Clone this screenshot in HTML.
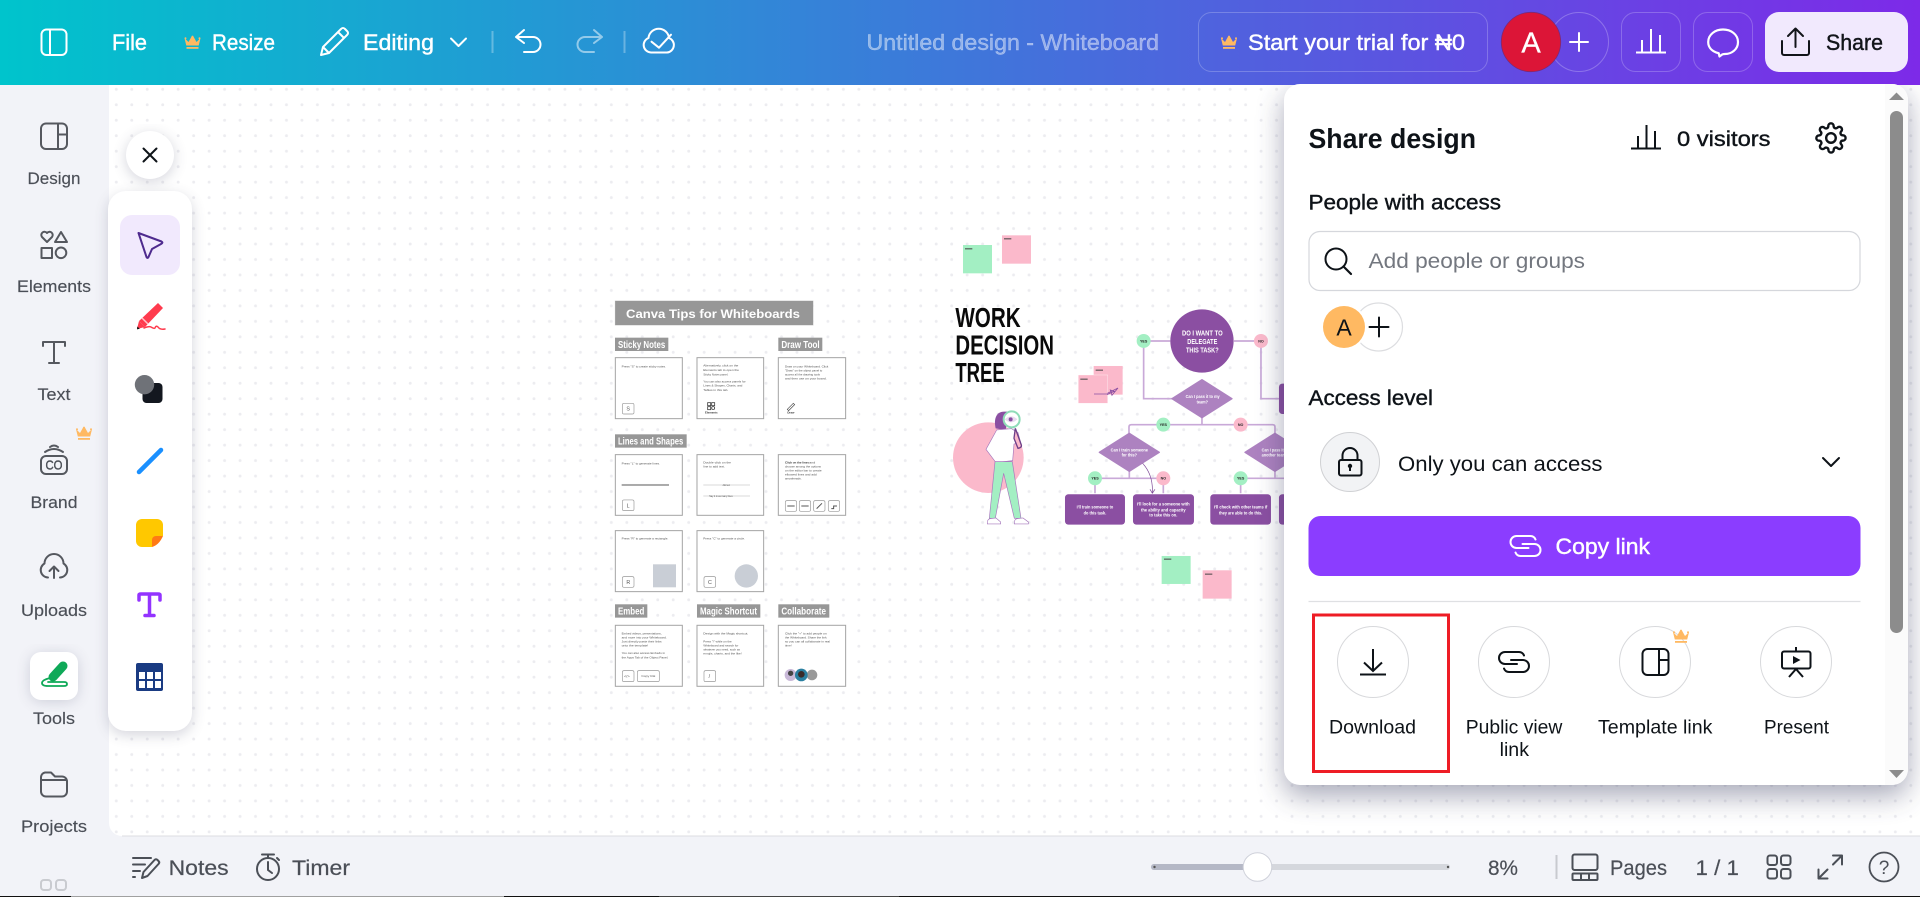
<!DOCTYPE html>
<html lang="en"><head><meta charset="utf-8"><title>Untitled design - Whiteboard</title>
<style>
html,body{margin:0;padding:0;width:1920px;height:897px;overflow:hidden;background:#f2f3f8}
svg{display:block;font-family:"Liberation Sans",sans-serif}
.m{stroke-width:.4px}
.nav text{font-size:17px;fill:#4b4f57;stroke:#4b4f57;stroke-width:.15px}
.nav .i{fill:none;stroke:#55585f;stroke-width:2;stroke-linecap:round;stroke-linejoin:round}
.tiny text{font-size:9px;fill:#555}
.tiny .b{font-weight:bold;fill:#333}
.tiny .lab{font-weight:bold;fill:#fff;font-size:31px}
.fl{font-weight:bold;fill:#fff;font-size:15px;text-anchor:middle}
.yn{font-weight:bold;fill:#222;font-size:11px;text-anchor:middle}
</style></head><body>
<svg width="1920" height="897" viewBox="0 0 1920 897" xmlns="http://www.w3.org/2000/svg">
<defs>
<linearGradient id="hdr" gradientUnits="userSpaceOnUse" x1="0" y1="0" x2="1920" y2="0"><stop offset="0" stop-color="#00c4cc"/><stop offset="1" stop-color="#7d2ae8"/></linearGradient>
<pattern id="dots" patternUnits="userSpaceOnUse" x="108.6" y="81.6" width="15.47" height="15.47"><circle cx="7.7" cy="7.7" r="1.45" fill="#ececf0"/></pattern>
<filter id="sh" x="-20%" y="-20%" width="140%" height="140%"><feGaussianBlur stdDeviation="14"/></filter>
<filter id="sh2" x="-40%" y="-20%" width="180%" height="140%"><feGaussianBlur stdDeviation="7"/></filter>
<g id="crown"><path d="M0 3.2a1 1 0 1 1 1.2 1L4 7 7 1.6a1 1 0 1 1 2 0L12 7l2.8-2.8a1 1 0 1 1 1.2-1L14.2 10.5H1.8z" fill="#ffb962"/><rect x="2" y="12" width="12" height="1.8" fill="#ffb962"/></g>
<g id="link" fill="none" stroke-width="2" stroke-linecap="round"><path d="M10-6.5a5.5 5.5 0 0 0-5-3.5h-14a6 6 0 0 0 0 12h12"/><path d="M-10 6.5a5.5 5.5 0 0 0 5 3.5h14a6 6 0 0 0 0-12h-12"/></g>
<clipPath id="cv"><path d="M109 85H1920V836H122a13 13 0 0 1-13-13z"/></clipPath>
</defs>

<rect width="1920" height="897" fill="#f2f3f8"/>
<!-- canvas -->
<path d="M109 85H1920V836H122a13 13 0 0 1-13-13z" fill="#fff"/>
<g clip-path="url(#cv)">
<rect x="109" y="85" width="1811" height="751" fill="url(#dots)"/>

<!-- Tips board -->
<g class="tiny" transform="translate(600 290) scale(.3333)">
<rect x="45" y="32" width="595" height="74" fill="#979797" stroke="#ddd" stroke-width="1"/>
<text x="78" y="84" textLength="522" lengthAdjust="spacingAndGlyphs" style="font-size:37px;font-weight:bold;fill:#fff">Canva Tips for Whiteboards</text>
<g fill="#979797">
<rect x="45" y="143" width="160" height="40"/><rect x="535" y="143" width="132" height="40"/><rect x="45" y="433" width="215" height="40"/><rect x="45" y="943" width="97" height="40"/><rect x="291" y="943" width="190" height="40"/><rect x="535" y="943" width="153" height="40"/>
</g>
<text class="lab" x="54" y="174" textLength="142" lengthAdjust="spacingAndGlyphs">Sticky Notes</text>
<text class="lab" x="544" y="174" textLength="115" lengthAdjust="spacingAndGlyphs">Draw Tool</text>
<text class="lab" x="54" y="464" textLength="196" lengthAdjust="spacingAndGlyphs">Lines and Shapes</text>
<text class="lab" x="54" y="974" textLength="79" lengthAdjust="spacingAndGlyphs">Embed</text>
<text class="lab" x="300" y="974" textLength="171" lengthAdjust="spacingAndGlyphs">Magic Shortcut</text>
<text class="lab" x="544" y="974" textLength="134" lengthAdjust="spacingAndGlyphs">Collaborate</text>
<g fill="#fff" stroke="#a4a4a4" stroke-width="3">
<rect x="46" y="203" width="201" height="183"/><rect x="291" y="203" width="200" height="183"/><rect x="535" y="203" width="202" height="183"/>
<rect x="46" y="494" width="201" height="182"/><rect x="291" y="494" width="200" height="182"/><rect x="535" y="494" width="202" height="182"/>
<rect x="46" y="722" width="201" height="183"/><rect x="291" y="722" width="200" height="183"/>
<rect x="46" y="1006" width="201" height="183"/><rect x="291" y="1006" width="200" height="183"/><rect x="535" y="1006" width="202" height="183"/>
</g>
<text x="65" y="233" textLength="133" lengthAdjust="spacingAndGlyphs">Press "S" to create sticky notes.</text>
<text x="310" y="230" textLength="105" lengthAdjust="spacingAndGlyphs">Alternatively, click on the</text>
<text x="310" y="243" textLength="107" lengthAdjust="spacingAndGlyphs">Elements tab to open the</text>
<text x="310" y="256" textLength="75" lengthAdjust="spacingAndGlyphs">Sticky Notes panel.</text>
<text x="310" y="278" textLength="127" lengthAdjust="spacingAndGlyphs">You can also access panels for</text>
<text x="310" y="290" textLength="117" lengthAdjust="spacingAndGlyphs">Lines &amp; Shapes, Charts, and</text>
<text x="310" y="303" textLength="75" lengthAdjust="spacingAndGlyphs">Tables in this tab.</text>
<g fill="none" stroke="#444" stroke-width="2.5"><rect x="323" y="338" width="9" height="9"/><rect x="335" y="338" width="9" height="9"/><rect x="323" y="350" width="9" height="9"/><circle cx="339.500" cy="354" r="4.500"/></g>
<text class="b" x="315" y="371" textLength="38" lengthAdjust="spacingAndGlyphs">Elements</text>
<text x="555" y="232" textLength="130" lengthAdjust="spacingAndGlyphs">Draw on your Whiteboard. Click</text>
<text x="555" y="244" textLength="112" lengthAdjust="spacingAndGlyphs">"Draw" on the object panel to</text>
<text x="555" y="256" textLength="105" lengthAdjust="spacingAndGlyphs">access all the drawing tools</text>
<text x="555" y="268" textLength="125" lengthAdjust="spacingAndGlyphs">and then use on your board.</text>
<path d="M562 358l18-18 4 4-18 18z" fill="none" stroke="#444" stroke-width="2"/>
<text class="b" x="562" y="371" textLength="21" lengthAdjust="spacingAndGlyphs">Draw</text>
<text x="65" y="524" textLength="115" lengthAdjust="spacingAndGlyphs">Press "L" to generate lines.</text>
<rect x="65" y="582" width="142" height="6" fill="#aaa"/>
<text x="310" y="520" textLength="83" lengthAdjust="spacingAndGlyphs">Double-click on the</text>
<text x="310" y="533" textLength="65" lengthAdjust="spacingAndGlyphs">line to add text.</text>
<path d="M310 585h140M310 618h140" stroke="#ccc" stroke-width="2"/>
<text x="368" y="588" textLength="22" lengthAdjust="spacingAndGlyphs" style="font-size:7px">Add text</text>
<text x="328" y="621" textLength="70" lengthAdjust="spacingAndGlyphs" style="font-size:7px">Say it in as many lines</text>
<text class="b" x="555" y="520" textLength="72" lengthAdjust="spacingAndGlyphs">Click on the lines</text>
<text x="628" y="520" textLength="18" lengthAdjust="spacingAndGlyphs">and</text>
<text x="555" y="532" textLength="108" lengthAdjust="spacingAndGlyphs">choose among the options</text>
<text x="555" y="544" textLength="110" lengthAdjust="spacingAndGlyphs">on the editor bar to create</text>
<text x="555" y="556" textLength="95" lengthAdjust="spacingAndGlyphs">elbowed lines and add</text>
<text x="555" y="568" textLength="50" lengthAdjust="spacingAndGlyphs">arrowheads.</text>
<g fill="#fff" stroke="#999" stroke-width="2">
<rect x="67" y="340" width="35" height="32" rx="5"/><rect x="67" y="630" width="35" height="32" rx="5"/>
<rect x="556" y="632" width="34" height="32" rx="5"/><rect x="598" y="632" width="34" height="32" rx="5"/><rect x="641" y="632" width="34" height="32" rx="5"/><rect x="685" y="632" width="34" height="32" rx="5"/>
<rect x="67" y="860" width="35" height="32" rx="5"/><rect x="312" y="860" width="35" height="32" rx="5"/>
<rect x="67" y="1142" width="35" height="33" rx="5"/><rect x="112" y="1142" width="66" height="33" rx="5"/><rect x="312" y="1142" width="35" height="33" rx="5"/>
</g>
<path d="M562 648h22M604 648h22M650 656l16-16M694 656h7v-8h10" stroke="#555" stroke-width="3" fill="none"/>
<g><text x="79" y="362" style="font-size:16px">S</text><text x="80" y="652" style="font-size:16px">L</text><text x="79" y="882" style="font-size:16px">R</text><text x="324" y="882" style="font-size:16px">C</text><text x="72" y="1163" style="font-size:12px">&lt;/&gt;</text><text x="326" y="1164" style="font-size:16px">/</text></g>
<text x="124" y="1161" textLength="42" lengthAdjust="spacingAndGlyphs" style="font-size:8px">Copy link</text>
<text x="65" y="748" textLength="140" lengthAdjust="spacingAndGlyphs">Press "R" to generate a rectangle.</text>
<rect x="159" y="823" width="69" height="69" fill="#c9ced6"/>
<text x="310" y="748" textLength="125" lengthAdjust="spacingAndGlyphs">Press "C" to generate a circle.</text>
<circle cx="439" cy="858" r="35" fill="#c9ced6"/>
<text x="65" y="1033" textLength="120" lengthAdjust="spacingAndGlyphs">Embed videos, presentations,</text>
<text x="65" y="1045" textLength="135" lengthAdjust="spacingAndGlyphs">and more into your Whiteboard.</text>
<text x="65" y="1057" textLength="120" lengthAdjust="spacingAndGlyphs">Just directly paste their links</text>
<text x="65" y="1069" textLength="80" lengthAdjust="spacingAndGlyphs">onto the template!</text>
<text x="65" y="1092" textLength="130" lengthAdjust="spacingAndGlyphs">You can also access Embeds in</text>
<text x="65" y="1105" textLength="140" lengthAdjust="spacingAndGlyphs">the Apps Tab of the Object Panel.</text>
<text x="310" y="1033" textLength="135" lengthAdjust="spacingAndGlyphs">Design with the Magic shortcut.</text>
<text x="310" y="1057" textLength="85" lengthAdjust="spacingAndGlyphs">Press "/" while on the</text>
<text x="310" y="1069" textLength="105" lengthAdjust="spacingAndGlyphs">Whiteboard and search for</text>
<text x="310" y="1081" textLength="110" lengthAdjust="spacingAndGlyphs">whatever you need, such as</text>
<text x="310" y="1093" textLength="115" lengthAdjust="spacingAndGlyphs">emojis, charts, and the like!</text>
<text x="555" y="1033" textLength="125" lengthAdjust="spacingAndGlyphs">Click the "+" to add people on</text>
<text x="555" y="1045" textLength="125" lengthAdjust="spacingAndGlyphs">the Whiteboard. Share the link</text>
<text x="555" y="1057" textLength="135" lengthAdjust="spacingAndGlyphs">so you can all collaborate in real</text>
<text x="555" y="1069" textLength="20" lengthAdjust="spacingAndGlyphs">time!</text>
<circle cx="572" cy="1155" r="18" fill="#c9b9d8"/><circle cx="572" cy="1150" r="8" fill="#444"/>
<circle cx="636" cy="1155" r="16" fill="#999"/>
<circle cx="604" cy="1155" r="19" fill="#2a7fa0"/><circle cx="604" cy="1153" r="10" fill="#3a2a28"/>
</g>

<!-- decision tree -->
<g transform="translate(930 220) scale(.3333)">
<rect x="99" y="75" width="87" height="85" fill="#a3efc3"/><rect x="216" y="46" width="87" height="85" fill="#fbb9cb"/>
<rect x="105" y="85" width="22" height="3" fill="#444"/><rect x="222" y="55" width="22" height="3" fill="#444"/>
<g font-weight="bold" fill="#0a0a0a" font-size="82">
<text x="76" y="321" textLength="196" lengthAdjust="spacingAndGlyphs">WORK</text>
<text x="76" y="403" textLength="296" lengthAdjust="spacingAndGlyphs">DECISION</text>
<text x="76" y="486" textLength="148" lengthAdjust="spacingAndGlyphs">TREE</text>
</g>
<circle cx="175" cy="713" r="106" fill="#fbb9cb"/>
<!-- person -->
<path d="M197 625c-6-25 0-50 25-50h15l-10 55z" fill="#8b4fa2"/>
<path d="M200 630l-22 40-10 18 30 40 50-6 4-50 20-4-8-30-20-12z" fill="#fff" stroke="#a678bd" stroke-width="2"/>
<path d="M195 725h52l26 170h-20l-32-135-25 135h-18z" fill="#a3efc3" stroke="#a678bd" stroke-width="2"/>
<path d="M172 908q0-10 8-12l18-2 14 12v6h-40zM253 908q0-10 8-12l18-2 16 12v6h-42z" fill="#fff" stroke="#a678bd" stroke-width="2"/>
<path d="M256 625l18 50q2 8-10 10l-12-30z" fill="#fbb9cb" stroke="#6d3f88" stroke-width="4"/>
<circle cx="245" cy="598" r="24" fill="#fff" stroke="#8fdcb8" stroke-width="6"/>
<path d="M224 598q20-18 38 0q-18 18-38 0z" fill="#e8dcef"/><circle cx="242" cy="598" r="6" fill="#8b4fa2"/>
<!-- connectors -->
<g fill="none" stroke="#c9a9d8" stroke-width="5">
<path d="M641 363h80v0M912 363h81v173h55M641 363v173h88"/>
<path d="M816 590v24M597 640v-19q0-7 7-7h424q7 0 7 7v19"/>
<path d="M598 750v25M495 820v-45h205v45"/>
<path d="M1035 750v25M932 820v-45h170"/>
</g>
<circle cx="816" cy="363" r="95" fill="#8b4fa2"/>
<path d="M816 479l90 57-90 57-90-57z" fill="#ad82c0" stroke="#ad82c0" stroke-width="4" stroke-linejoin="round"/>
<path d="M598 640l90 57-90 57-90-57z" fill="#ad82c0" stroke="#ad82c0" stroke-width="4" stroke-linejoin="round"/>
<path d="M1035 640l90 57-90 57-90-57z" fill="#ad82c0" stroke="#ad82c0" stroke-width="4" stroke-linejoin="round"/>
<g fill="#8b4fa2"><rect x="405" y="823" width="180" height="91" rx="10"/><rect x="609" y="823" width="183" height="91" rx="10"/><rect x="841" y="823" width="182" height="91" rx="10"/><rect x="1047" y="823" width="100" height="91" rx="10"/><rect x="1047" y="491" width="100" height="91" rx="10"/></g>
<g fill="#a3efc3"><circle cx="641" cy="363" r="21"/><circle cx="700" cy="614" r="21"/><circle cx="495" cy="775" r="21"/><circle cx="932" cy="775" r="21"/></g>
<g fill="#fbb9cb"><circle cx="993" cy="363" r="21"/><circle cx="932" cy="614" r="21"/><circle cx="700" cy="775" r="21"/></g>
<g class="yn"><text class="yn" x="641" y="367">YES</text><text class="yn" x="700" y="618">YES</text><text class="yn" x="495" y="779">YES</text><text class="yn" x="932" y="779">YES</text><text class="yn" x="993" y="367">NO</text><text class="yn" x="932" y="618">NO</text><text class="yn" x="700" y="779">NO</text></g>
<text class="fl" x="817" y="347" style="font-size:21px" textLength="122" lengthAdjust="spacingAndGlyphs">DO I WANT TO</text>
<text class="fl" x="817" y="372" style="font-size:21px" textLength="90" lengthAdjust="spacingAndGlyphs">DELEGATE</text>
<text class="fl" x="817" y="398" style="font-size:21px" textLength="98" lengthAdjust="spacingAndGlyphs">THIS TASK?</text>
<text class="fl" x="818" y="534" textLength="102" lengthAdjust="spacingAndGlyphs">Can I pass it to my</text>
<text class="fl" x="817" y="551" textLength="34" lengthAdjust="spacingAndGlyphs">team?</text>
<text class="fl" x="598" y="695" textLength="112" lengthAdjust="spacingAndGlyphs">Can I train someone</text>
<text class="fl" x="598" y="710" textLength="46" lengthAdjust="spacingAndGlyphs">for this?</text>
<text class="fl" x="1035" y="695" textLength="80" lengthAdjust="spacingAndGlyphs">Can I pass it to</text>
<text class="fl" x="1035" y="710" textLength="80" lengthAdjust="spacingAndGlyphs">another team?</text>
<text class="fl" x="495" y="866" textLength="110" lengthAdjust="spacingAndGlyphs">I'll train someone to</text>
<text class="fl" x="495" y="884" textLength="68" lengthAdjust="spacingAndGlyphs">do this task.</text>
<text class="fl" x="700" y="857" textLength="158" lengthAdjust="spacingAndGlyphs">I'll look for a someone with</text>
<text class="fl" x="700" y="875" textLength="134" lengthAdjust="spacingAndGlyphs">the ability and capacity</text>
<text class="fl" x="700" y="890" textLength="84" lengthAdjust="spacingAndGlyphs">to take this on.</text>
<text class="fl" x="932" y="866" textLength="160" lengthAdjust="spacingAndGlyphs">I'll check with other teams if</text>
<text class="fl" x="932" y="884" textLength="130" lengthAdjust="spacingAndGlyphs">they are able to do this.</text>
<path d="M638 730q32 35 29 88M660 808l7 12 8-12" fill="none" stroke="#7a4494" stroke-width="2"/>
<rect x="491" y="438" width="87" height="86" fill="#fbb9cb"/>
<rect x="445" y="465" width="88" height="85" fill="#fbb9cb" stroke="#fff" stroke-width="1"/>
<rect x="497" y="449" width="22" height="3" fill="#444"/><rect x="451" y="476" width="22" height="3" fill="#444"/>
<path d="M492 522h40M532 520l32-16-18 22-5-16 12 4-22 10" fill="none" stroke="#8b4fa2" stroke-width="2.500"/>
<rect x="695" y="1008" width="87" height="84" fill="#a3efc3"/><rect x="818" y="1051" width="87" height="85" fill="#fbb9cb"/>
<rect x="702" y="1016" width="22" height="3" fill="#444"/><rect x="825" y="1061" width="22" height="3" fill="#444"/>
</g>
<!-- panel shadow -->
<rect x="1284" y="94" width="624" height="702" rx="16" fill="#30345a" opacity=".42" filter="url(#sh)"/>
</g>

<!-- header -->
<rect width="1920" height="85" fill="url(#hdr)"/>
<g fill="none" stroke="#fff" stroke-width="2" stroke-linecap="round" stroke-linejoin="round">
<rect x="41.500" y="29.500" width="25" height="25.500" rx="5"/><path d="M50 30v25"/>
<path d="M321 55l2-8L341 29q2-2 4 0l2 2q2 2 0 4L329 53zM338 32l6 6M323 47l6 6"/>
<path d="M451 38.500l7.500 7.500 7.500-7.500"/>
<path d="M524 30l-8 7 8 6M516 37h17a7.500 7.500 0 0 1 0 15h-9"/>
<g opacity=".5"><path d="M594 30l8 7-8 6M602 37h-17a7.500 7.500 0 0 0 0 15h9"/></g>
<path d="M651 52.500a7.500 7.500 0 0 1-2.500-14.500a10.300 10.300 0 0 1 20.500 0a7.500 7.500 0 0 1-2 14.500z"/>
<path d="M651.500 41.700l7.500 6 12-13"/>
</g>
<path d="M492.500 31v22M624.500 31v22" stroke="#fff" stroke-opacity=".3" stroke-width="2"/>
<g fill="#fff" stroke="#fff" class="m" font-size="22">
<text x="112" y="50" textLength="35" lengthAdjust="spacingAndGlyphs">File</text>
<text x="212" y="50" textLength="63" lengthAdjust="spacingAndGlyphs">Resize</text>
<text x="363" y="50" textLength="71" lengthAdjust="spacingAndGlyphs">Editing</text>
<text x="1248" y="50" textLength="217" lengthAdjust="spacingAndGlyphs">Start your trial for ₦0</text>
</g>
<text x="866.500" y="50" textLength="292.500" lengthAdjust="spacingAndGlyphs" font-size="22" fill="#fff" fill-opacity=".45" stroke="#fff" stroke-opacity=".45" class="m">Untitled design - Whiteboard</text>
<use href="#crown" transform="translate(184.500 35)"/>
<use href="#crown" transform="translate(1221 35)"/>
<rect x="1198.500" y="12.500" width="289" height="59" rx="13" fill="none" stroke="#fff" stroke-opacity=".22"/>
<circle cx="1579" cy="42" r="29.500" fill="none" stroke="#fff" stroke-opacity=".25"/>
<path d="M1570 42h18M1579 33v18" stroke="#fff" stroke-width="2" stroke-linecap="round"/>
<circle cx="1531" cy="42" r="29.700" fill="#dc1537" stroke="#7a2a78" stroke-width=".8"/>
<text x="1531" y="52.500" text-anchor="middle" font-size="29" fill="#fff" stroke="#fff" stroke-width=".3">A</text>
<rect x="1621.500" y="12.500" width="59" height="59" rx="14" fill="none" stroke="#fff" stroke-opacity=".22"/>
<rect x="1693.500" y="12.500" width="59" height="59" rx="14" fill="none" stroke="#fff" stroke-opacity=".22"/>
<path d="M1636 52.500h30M1642 52v-12M1651 52V29M1660 52V35" stroke="#fff" stroke-width="2" fill="none"/>
<path d="M1723 29.500c8 0 15 5 15 12.500s-6.500 12-13 12c-1.500 0-2.500 0-3.500 1l-2 1.500-.8-3.300c-6-1.500-10.500-5.200-10.500-11.200 0-7.500 7-12.500 14.800-12.500z" fill="none" stroke="#fff" stroke-width="2.200" stroke-linejoin="round"/>
<rect x="1765" y="12" width="143" height="60" rx="14" fill="#f1e9fd"/>
<path d="M1782 41v12a2 2 0 0 0 2 2h23a2 2 0 0 0 2-2V41M1795.500 47V29M1788 36l7.500-7.500 7.500 7.500" fill="none" stroke="#12151a" stroke-width="2" stroke-linecap="round" stroke-linejoin="round"/>
<text x="1826" y="50" textLength="57" lengthAdjust="spacingAndGlyphs" font-size="22" fill="#12151a" stroke="#12151a" class="m">Share</text>

<!-- left nav -->
<g class="nav">
<text x="27.500" y="184" textLength="53" lengthAdjust="spacingAndGlyphs">Design</text>
<text x="17" y="292" textLength="74" lengthAdjust="spacingAndGlyphs">Elements</text>
<text x="37.500" y="400" textLength="33" lengthAdjust="spacingAndGlyphs">Text</text>
<text x="30.500" y="508" textLength="47" lengthAdjust="spacingAndGlyphs">Brand</text>
<text x="21" y="616" textLength="66" lengthAdjust="spacingAndGlyphs">Uploads</text>
<text x="33" y="724" textLength="42" lengthAdjust="spacingAndGlyphs">Tools</text>
<text x="21" y="832" textLength="66" lengthAdjust="spacingAndGlyphs">Projects</text>
<g class="i">
<rect x="41" y="123.500" width="26" height="25.500" rx="5"/><path d="M58 124v25M58 134.500h9"/>
<path d="M47 242l-5-5a3.200 3.200 0 0 1 5-4a3.200 3.200 0 0 1 5 4z"/><path d="M61 232l6 10h-12z"/><rect x="41.500" y="248" width="10.500" height="10"/><circle cx="61" cy="252.800" r="5.300"/>
<path d="M43 346v-4h22v4M54 342v21M49 363h10"/>
<rect x="41" y="456" width="26" height="18" rx="5"/><path d="M45 452q9-6 18 0M50 447q4-3 8 0"/>
<path d="M54 578v-11M49.500 571l4.500-4.500 4.500 4.500M48 577.500a7.500 7.500 0 0 1-3.500-14a9.500 9.500 0 0 1 19 0a7.500 7.500 0 0 1-3.500 14"/>
<path d="M41 792v-15a5 5 0 0 1 4-4.500h6l4 4h7a5 5 0 0 1 5 5v10a5 5 0 0 1-5 5H46a5 5 0 0 1-5-5zM42 780h24"/>
</g>
<text x="54" y="469.500" text-anchor="middle" style="font-size:13px;stroke-width:.4px;text-anchor:middle" textLength="17" lengthAdjust="spacingAndGlyphs">CO</text>
<g fill="none" stroke="#c9cbd0" stroke-width="2"><rect x="41" y="880" width="10" height="10" rx="3"/><rect x="56" y="880" width="10" height="10" rx="3"/></g>
</g>
<use href="#crown" transform="translate(76 426)"/>
<rect x="30" y="654" width="48" height="48" rx="12" fill="#3c4060" opacity=".2" filter="url(#sh2)"/>
<rect x="30" y="652" width="48" height="48" rx="11" fill="#fff"/>
<path d="M53 677l10-11" stroke="#0fa958" stroke-width="9" stroke-linecap="round"/>
<path d="M50 678q-8 2-8 5t6 3h16q3 0 3-2t-3-2H48" fill="none" stroke="#0fa958" stroke-width="1.800" stroke-linecap="round"/>

<!-- tool panel -->
<rect x="108" y="195" width="84" height="540" rx="18" fill="#3c4060" opacity=".22" filter="url(#sh2)"/>
<circle cx="150" cy="158" r="24" fill="#3c4060" opacity=".22" filter="url(#sh2)"/>
<path d="M108 209a18 18 0 0 1 18-18h48a18 18 0 0 1 18 18v504a18 18 0 0 1-18 18h-48a18 18 0 0 1-18-18z" fill="#fff"/>
<circle cx="150" cy="155" r="24" fill="#fff"/>
<path d="M143.500 148.500l13 13M156.500 148.500l-13 13" stroke="#0e1318" stroke-width="2" stroke-linecap="round"/>
<rect x="120" y="215" width="60" height="60" rx="12" fill="#f1e9fd"/>
<path d="M138.500 233l23 8.500q2 1-.5 2.500l-9 5-3.500 8q-1 2-2 0z" fill="none" stroke="#4e2a8e" stroke-width="2" stroke-linejoin="round"/>
<!-- red pen -->
<path d="M139 321L158 303l5 5L145 327z" fill="#ff3b4e"/>
<path d="M142 318l6 6" stroke="#ffc4ca" stroke-width="1.500"/>
<path d="M139 321l6 6-8 2z" fill="#ff3b4e"/><path d="M137.300 326.500l2.500 2.300-2.800.6z" fill="#111"/>
<path d="M144 328q5-2 7-1q3 2 4 1q1-3 3-1q2 3 7 2" fill="none" stroke="#ff3b4e" stroke-width="1.500" stroke-linecap="round"/>
<rect x="142.500" y="383" width="20" height="20" rx="4" fill="#13171f"/>
<circle cx="144.500" cy="384.700" r="9.700" fill="#6f7278"/>
<path d="M139 472l22-22" stroke="#1a90ff" stroke-width="4.500" stroke-linecap="round"/>
<path d="M136 525a6 6 0 0 1 6-6h15a6 6 0 0 1 6 6v11l-11 11h-10a6 6 0 0 1-6-6z" fill="#ffc800"/>
<path d="M163 536h-7a4 4 0 0 0-4 4v7q7-2 11-11z" fill="#ff7a14"/>
<path d="M139 600v-5q0-1 2-1h17q2 0 2 1v5M149.500 595v20M145 615.500h9" fill="none" stroke="#9333ff" stroke-width="3.500" stroke-linecap="round"/>
<rect x="136" y="663" width="27" height="28" rx="2" fill="#1a3b82"/>
<g fill="#fff"><rect x="139" y="672" width="6" height="7"/><rect x="147" y="672" width="6" height="7"/><rect x="155" y="672" width="6" height="7"/><rect x="139" y="681" width="6" height="7"/><rect x="147" y="681" width="6" height="7"/><rect x="155" y="681" width="6" height="7"/></g>

<!-- share panel -->
<rect x="1284" y="84" width="624" height="701" rx="16" fill="#fff"/>
<path d="M1885 84h7a16 16 0 0 1 16 16v669a16 16 0 0 1-16 16h-7z" fill="#fbfbfb"/>
<path d="M1889 100l7.500-7.500 7.500 7.500zM1889 770l7.500 8 7.500-8z" fill="#8c8c8c"/>
<rect x="1890" y="111" width="13" height="522" rx="6.500" fill="#8c8c8c"/>
<text x="1308.500" y="148" textLength="167.500" lengthAdjust="spacingAndGlyphs" font-size="28" font-weight="bold" fill="#0e1318">Share design</text>
<path d="M1631 148.500h30M1638 148v-12M1646.500 148v-23M1655 148v-17" stroke="#0e1318" stroke-width="2" fill="none"/>
<text x="1677" y="146" textLength="93.500" lengthAdjust="spacingAndGlyphs" font-size="21.500" fill="#0e1318" stroke="#0e1318" class="m">0 visitors</text>
<g transform="translate(1815 122) scale(1.33)"><path fill="none" stroke="#0e1318" stroke-width="1.800" stroke-linejoin="round" d="M19.400 15a1.650 1.650 0 0 0 .33 1.820l.06.06a2 2 0 0 1 0 2.830 2 2 0 0 1-2.830 0l-.06-.06a1.650 1.650 0 0 0-1.820-.33 1.650 1.650 0 0 0-1 1.510V21a2 2 0 0 1-2 2 2 2 0 0 1-2-2v-.09A1.650 1.650 0 0 0 9 19.400a1.650 1.650 0 0 0-1.820.33l-.06.06a2 2 0 0 1-2.830 0 2 2 0 0 1 0-2.830l.06-.06a1.650 1.650 0 0 0 .33-1.820 1.650 1.650 0 0 0-1.510-1H3a2 2 0 0 1-2-2 2 2 0 0 1 2-2h.09A1.650 1.650 0 0 0 4.600 9a1.650 1.650 0 0 0-.33-1.820l-.06-.06a2 2 0 0 1 0-2.830 2 2 0 0 1 2.830 0l.06.06a1.650 1.650 0 0 0 1.820.33H9a1.650 1.650 0 0 0 1-1.510V3a2 2 0 0 1 2-2 2 2 0 0 1 2 2v.09a1.650 1.650 0 0 0 1 1.510 1.650 1.650 0 0 0 1.820-.33l.06-.06a2 2 0 0 1 2.830 0 2 2 0 0 1 0 2.830l-.06.06a1.650 1.650 0 0 0-.33 1.820V9a1.650 1.650 0 0 0 1.510 1H21a2 2 0 0 1 2 2 2 2 0 0 1-2 2h-.09a1.650 1.650 0 0 0-1.510 1z"/><circle cx="12" cy="12" r="3.600" fill="none" stroke="#0e1318" stroke-width="1.800"/></g>
<text x="1308.500" y="209.500" textLength="192.500" lengthAdjust="spacingAndGlyphs" font-size="21" fill="#0e1318" stroke="#0e1318" class="m">People with access</text>
<rect x="1309" y="231.500" width="551" height="59" rx="11" fill="#fff" stroke="#d5d7dc" stroke-width="1.200"/>
<circle cx="1336" cy="259" r="10.500" fill="none" stroke="#0e1318" stroke-width="2"/><path d="M1343.500 266.500l7.500 7.500" stroke="#0e1318" stroke-width="2.200" stroke-linecap="round"/>
<text x="1368.500" y="268" textLength="216.500" lengthAdjust="spacingAndGlyphs" font-size="21.500" fill="#73777f">Add people or groups</text>
<circle cx="1378.500" cy="327" r="24" fill="#fff" stroke="#dcdde0" stroke-width="1.200"/>
<path d="M1369.500 327h19M1379 317.500v19" stroke="#0e1318" stroke-width="2" stroke-linecap="round"/>
<circle cx="1344" cy="327" r="23" fill="#fff"/><circle cx="1344" cy="327" r="21" fill="#ffb962"/>
<text x="1344" y="335.500" text-anchor="middle" font-size="23" fill="#0e1318">A</text>
<text x="1308.500" y="405" textLength="124.500" lengthAdjust="spacingAndGlyphs" font-size="21" fill="#0e1318" stroke="#0e1318" class="m">Access level</text>
<circle cx="1350" cy="462" r="29.500" fill="#f2f3f5" stroke="#d0d1d4" stroke-width="1"/>
<path d="M1342.500 460v-4.500a7.500 7.500 0 0 1 15 0v4.500" fill="none" stroke="#0e1318" stroke-width="2"/>
<rect x="1339" y="460" width="22.500" height="15.500" rx="2" fill="none" stroke="#0e1318" stroke-width="2"/>
<circle cx="1350" cy="466" r="2.200" fill="#0e1318"/><path d="M1350 466v5" stroke="#0e1318" stroke-width="2"/>
<text x="1398" y="471" textLength="204.500" lengthAdjust="spacingAndGlyphs" font-size="21.500" fill="#0e1318">Only you can access</text>
<path d="M1823 458l8 8 8-8" fill="none" stroke="#0e1318" stroke-width="2" stroke-linecap="round" stroke-linejoin="round"/>
<rect x="1308.500" y="516" width="552" height="60" rx="12" fill="#8b3dff"/>
<use href="#link" transform="translate(1525.500 546)" stroke="#fff"/>
<text x="1555.500" y="554" textLength="94.500" lengthAdjust="spacingAndGlyphs" font-size="22" fill="#fff" stroke="#fff" class="m">Copy link</text>
<path d="M1308.500 601.500h552" stroke="#dfe0e3" stroke-width="1.200"/>
<g fill="#fff" stroke="#d8d9dc" stroke-width="1"><circle cx="1373" cy="662" r="35.500"/><circle cx="1514" cy="662" r="35.500"/><circle cx="1655" cy="662" r="35.500"/><circle cx="1796" cy="662" r="35.500"/></g>
<path d="M1373 649v22M1364 662.500l9 8.500 9-8.500M1360 674.500h26" fill="none" stroke="#0e1318" stroke-width="2"/>
<use href="#link" transform="translate(1514 662)" stroke="#0e1318"/>
<rect x="1642.500" y="649" width="26" height="26" rx="5" fill="none" stroke="#0e1318" stroke-width="2"/>
<path d="M1659 649v26M1659 660h9" stroke="#0e1318" stroke-width="2"/>
<use href="#crown" transform="translate(1673 629)"/>
<rect x="1782" y="651.500" width="28.500" height="17" rx="2" fill="none" stroke="#0e1318" stroke-width="2"/>
<path d="M1796 647v4.500M1789 677l7-8 7 8" fill="none" stroke="#0e1318" stroke-width="2"/>
<path d="M1793 656l7.500 4-7.500 4z" fill="#0e1318"/>
<g font-size="19.500" fill="#0e1318">
<text x="1329" y="733.500" textLength="87" lengthAdjust="spacingAndGlyphs">Download</text>
<text x="1465.700" y="733.500" textLength="96.700" lengthAdjust="spacingAndGlyphs">Public view</text>
<text x="1499.600" y="756" textLength="29.400" lengthAdjust="spacingAndGlyphs">link</text>
<text x="1598" y="733.500" textLength="114.500" lengthAdjust="spacingAndGlyphs">Template link</text>
<text x="1764" y="733.500" textLength="65" lengthAdjust="spacingAndGlyphs">Present</text>
</g>
<rect x="1313.500" y="615" width="135" height="156.500" fill="none" stroke="#ee1c25" stroke-width="3"/>

<!-- bottom bar -->
<rect x="109" y="836" width="1811" height="61" fill="#f2f3f8"/>
<path d="M122 836H1920" stroke="#dcdde2" stroke-width="1"/>
<g fill="none" stroke="#4b4f57" stroke-width="2" stroke-linecap="round" stroke-linejoin="round">
<path d="M133 858h18M133 864.500h12M133 871h7M133 877h2"/>
<path d="M142 878l1.500-6 11-12q1.500-1.500 3 0l1 1q1.500 1.500 0 3l-11 12z"/>
<circle cx="268" cy="869" r="11"/><path d="M262 854.500h12M268 855v3M268 862v8l4 3M277 858l2 2"/>
<rect x="1572.500" y="854.500" width="25" height="15.500" rx="2"/>
<rect x="1572.500" y="873.500" width="25" height="6.500" rx="1"/><path d="M1581 874v6M1589 874v6"/>
<rect x="1767.500" y="855.500" width="9.500" height="9.500" rx="2.500"/><rect x="1781" y="855.500" width="9.500" height="9.500" rx="2.500"/><rect x="1767.500" y="869" width="9.500" height="9.500" rx="2.500"/><rect x="1781" y="869" width="9.500" height="9.500" rx="2.500"/>
<path d="M1833 855.500h9v9M1842 855.500l-9 9M1818.500 869.500v9h9M1818.500 878.500l9-9"/>
<circle cx="1884" cy="867" r="14.500" stroke-width="1.800"/>
</g>
<text x="1884" y="874" text-anchor="middle" font-size="19" fill="#4b4f57">?</text>
<g fill="#4b4f57" stroke="#4b4f57" stroke-width=".2" font-size="21">
<text x="168.600" y="875" textLength="60" lengthAdjust="spacingAndGlyphs">Notes</text>
<text x="292" y="875" textLength="58" lengthAdjust="spacingAndGlyphs">Timer</text>
<text x="1488" y="875" textLength="30" lengthAdjust="spacingAndGlyphs">8%</text>
<text x="1610" y="875" textLength="57" lengthAdjust="spacingAndGlyphs">Pages</text>
<text x="1695.500" y="875" textLength="43.500" lengthAdjust="spacingAndGlyphs">1 / 1</text>
</g>
<path d="M1556.500 855v24" stroke="#c8cacf" stroke-width="2"/>
<rect x="1151" y="864" width="299" height="6" rx="3" fill="#d5d7dd"/>
<path d="M1154 864h104v6h-104a3 3 0 0 1 0-6z" fill="#b5b8c6"/>
<circle cx="1154.500" cy="867" r="1.200" fill="#555"/><circle cx="1448" cy="867" r="1.200" fill="#555"/>
<circle cx="1257.500" cy="867" r="14.300" fill="#fff" stroke="#cfd1da" stroke-width="1"/>

<!-- bottom edge -->
<rect y="896" width="1920" height="1" fill="#111"/>
<rect x="71" y="896" width="433" height="1" fill="#a0a0a0"/>
<rect x="659" y="896" width="240" height="1" fill="#444"/>
</svg>
</body></html>
